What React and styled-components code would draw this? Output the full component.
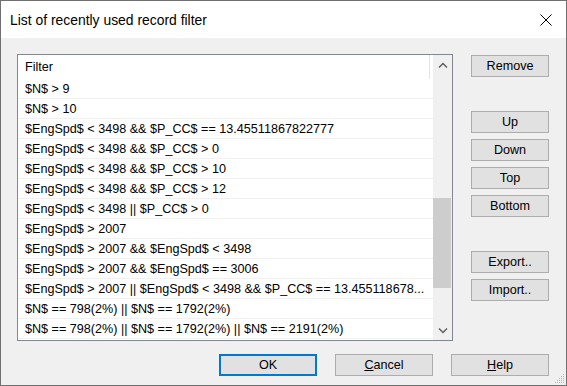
import React from "react";
import styled, { createGlobalStyle } from "styled-components";

const FONT = `"Liberation Sans", Arial, sans-serif`;

const Global = createGlobalStyle`
  html, body { margin: 0; padding: 0; background: #ffffff; }
  body { font-family: ${FONT}; }
`;

const Window = styled.div`
  position: relative;
  box-sizing: border-box;
  width: 567px;
  height: 386px;
  border: 1px solid #707070;
  background: #f0f0f0;
  display: flex;
  flex-direction: column;
  overflow: hidden;
`;

const TitleBar = styled.div`
  height: 37px;
  background: #ffffff;
  display: flex;
  align-items: center;
  justify-content: space-between;
  padding: 0 14px 0 9px;
`;

const Title = styled.div`
  font-size: 13.9px;
  color: #000;
  margin-top: 1px;
`;

const Close = styled.svg`
  width: 12px;
  height: 12px;
  display: block;
`;

const Body = styled.div`
  flex: 1;
  padding: 16px 17px 0 16px;
  display: flex;
  flex-direction: column;
`;

const Main = styled.div`
  display: flex;
  gap: 18px;
`;

const ListBox = styled.div`
  box-sizing: border-box;
  width: 436px;
  height: 287px;
  border: 1px solid #828790;
  background: #ffffff;
  display: flex;
  overflow: hidden;
`;

const ListContent = styled.div`
  flex: 1;
  overflow: hidden;
`;

const HeaderRow = styled.div`
  height: 24px;
  display: flex;
`;

const HeaderCell = styled.div`
  width: 404px;
  padding-left: 7px;
  display: flex;
  align-items: center;
  font-size: 12.6px;
  color: #000;
  border-right: 1px solid #e5e5e5;
`;

const Row = styled.div`
  box-sizing: border-box;
  height: 20px;
  padding: 1px 0 0 7px;
  display: flex;
  align-items: center;
  font-size: 12.6px;
  color: #000;
  white-space: nowrap;
  border-bottom: 1px solid #f0f0f0;
`;

const ScrollBar = styled.div`
  width: 19px;
  background: #f0f0f0;
  display: flex;
  flex-direction: column;
  align-items: stretch;
`;

const ScrollArrow = styled.div`
  height: 19px;
  display: flex;
  align-items: center;
  justify-content: center;
`;

const Track = styled.div`
  flex: 1;
  position: relative;
`;

const Thumb = styled.div`
  position: absolute;
  left: 0;
  right: 1px;
  background: #cdcdcd;
`;

const Side = styled.div`
  display: flex;
  flex-direction: column;
  padding-top: 1px;
  gap: 6px;
`;

const Btn = styled.button`
  box-sizing: border-box;
  width: ${(p) => p.$w || 78}px;
  height: 22px;
  margin: 0;
  padding: 0;
  background: #e1e1e1;
  border: ${(p) => (p.$default ? "2px solid #0078d7" : "1px solid #adadad")};
  font-family: ${FONT};
  font-size: 12.6px;
  color: #000;
  display: flex;
  align-items: center;
  justify-content: center;
  margin-bottom: ${(p) => (p.$spaced ? 28 : 0)}px;
`;

const Footer = styled.div`
  display: flex;
  justify-content: flex-end;
  gap: 18px;
  margin-top: 13px;
`;

const Grip = styled.svg`
  position: absolute;
  right: 1px;
  bottom: 1px;
  width: 12px;
  height: 12px;
`;

const rows = [
  "$N$ > 9",
  "$N$ > 10",
  "$EngSpd$ < 3498 && $P_CC$ == 13.45511867822777",
  "$EngSpd$ < 3498 && $P_CC$ > 0",
  "$EngSpd$ < 3498 && $P_CC$ > 10",
  "$EngSpd$ < 3498 && $P_CC$ > 12",
  "$EngSpd$ < 3498 || $P_CC$ > 0",
  "$EngSpd$ > 2007",
  "$EngSpd$ > 2007 && $EngSpd$ < 3498",
  "$EngSpd$ > 2007 && $EngSpd$ == 3006",
  "$EngSpd$ > 2007 || $EngSpd$ < 3498 && $P_CC$ == 13.455118678...",
  "$N$ == 798(2%) || $N$ == 1792(2%)",
  "$N$ == 798(2%) || $N$ == 1792(2%) || $N$ == 2191(2%)",
];

const gripDots = [
  [10, 2], [8, 4], [10, 4], [6, 6], [8, 6], [10, 6],
  [4, 8], [6, 8], [8, 8], [10, 8],
  [2, 10], [4, 10], [6, 10], [8, 10], [10, 10],
];

export default function App() {
  return (
    <>
      <Global />
      <Window>
        <TitleBar>
          <Title>List of recently used record filter</Title>
          <Close viewBox="0 0 12 12">
            <path d="M0.5 0.5 L11.5 11.5 M11.5 0.5 L0.5 11.5" stroke="#000" strokeWidth="1" fill="none" />
          </Close>
        </TitleBar>
        <Body>
          <Main>
            <ListBox>
              <ListContent>
                <HeaderRow>
                  <HeaderCell>Filter</HeaderCell>
                </HeaderRow>
                {rows.map((r, i) => (
                  <Row key={i}>{r}</Row>
                ))}
              </ListContent>
              <ScrollBar>
                <ScrollArrow>
                  <svg width="10" height="6" viewBox="0 0 10 6">
                    <polyline points="1,5.5 5,1.5 9,5.5" stroke="#606060" strokeWidth="1.5" fill="none" />
                  </svg>
                </ScrollArrow>
                <Track>
                  <Thumb style={{ top: 124, height: 90 }} />
                </Track>
                <ScrollArrow>
                  <svg width="10" height="6" viewBox="0 0 10 6">
                    <polyline points="1,0.5 5,4.5 9,0.5" stroke="#606060" strokeWidth="1.5" fill="none" />
                  </svg>
                </ScrollArrow>
              </ScrollBar>
            </ListBox>
            <Side>
              <Btn $spaced>Remove</Btn>
              <Btn>Up</Btn>
              <Btn>Down</Btn>
              <Btn>Top</Btn>
              <Btn $spaced>Bottom</Btn>
              <Btn>Export..</Btn>
              <Btn>Import..</Btn>
            </Side>
          </Main>
          <Footer>
            <Btn $w={98} $default>OK</Btn>
            <Btn $w={98}>
              <span><u>C</u>ancel</span>
            </Btn>
            <Btn $w={98}>
              <span><u>H</u>elp</span>
            </Btn>
          </Footer>
        </Body>
        <Grip viewBox="0 0 12 12">
          <g fill="#b4b4b4">
            {gripDots.map(([x, y], i) => (
              <rect key={i} x={x} y={y} width="1" height="1" />
            ))}
          </g>
        </Grip>
      </Window>
    </>
  );
}
